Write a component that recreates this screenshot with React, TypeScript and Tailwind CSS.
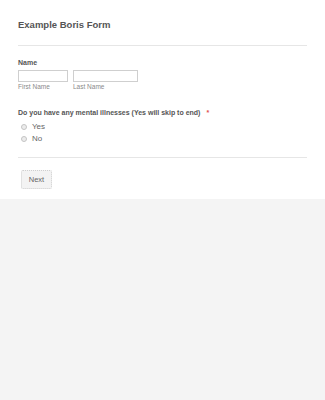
export default function App() {
  return (
    <div className="min-h-[400px] bg-[#f4f4f4] font-['Liberation_Sans',Arial,sans-serif]">
      <div className="h-[199px] bg-white px-[18px] pt-[18px]">
        <h1 className="text-[9.5px] font-bold leading-[14px] text-[#555]">Example Boris Form</h1>
        <div className="mt-[13px] h-px bg-[#e6e6e6]" />

        <div className="mt-[12px]">
          <div className="text-[7px] font-bold leading-[9px] text-[#555]">Name</div>
          <div className="mt-[3px] flex gap-[5px]">
            <div className="flex flex-col">
              <div className="h-[12px] w-[50px] border border-[#cfcfcf] bg-white" />
              <span className="mt-[1px] text-[6.5px] leading-[8px] text-[#8a8a8a]">First Name</span>
            </div>
            <div className="flex flex-col">
              <div className="h-[12px] w-[65px] border border-[#cfcfcf] bg-white" />
              <span className="mt-[1px] text-[6.5px] leading-[8px] text-[#8a8a8a]">Last Name</span>
            </div>
          </div>
        </div>

        <div className="mt-[17px]">
          <div className="text-[7px] font-bold leading-[10px] text-[#555]">
            Do you have any mental illnesses (Yes will skip to end)
            <span className="ml-[6px] text-[#e05050]">*</span>
          </div>
          <div className="mt-[4px] flex flex-col gap-[2px] pl-[3px]">
            {["Yes", "No"].map((o) => (
              <label key={o} className="flex items-center gap-[5px] text-[8px] leading-[10px] text-[#666]">
                <span className="h-[6px] w-[6px] rounded-full border border-[#c4c4c4] bg-[#ececec]" />
                {o}
              </label>
            ))}
          </div>
        </div>

        <div className="mt-[13px] h-px bg-[#e6e6e6]" />

        <button className="ml-[3px] mt-[12px] h-[19px] w-[31px] rounded-[2px] border border-dotted border-[#cfcfcf] bg-[#f3f3f3] text-[7.5px] text-[#666]">
          Next
        </button>
      </div>
    </div>
  );
}
